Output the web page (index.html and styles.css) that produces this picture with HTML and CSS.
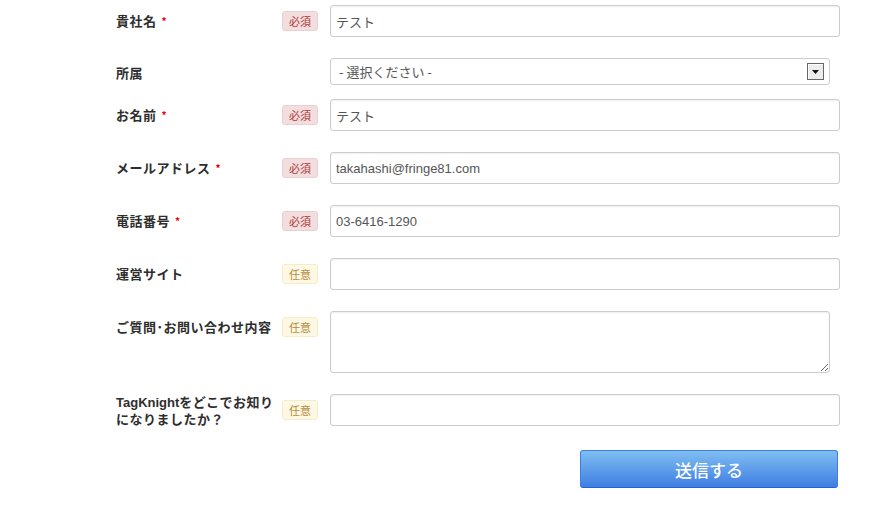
FILE: index.html
```html
<!DOCTYPE html>
<html lang="ja">
<head>
<meta charset="utf-8">
<title>お問い合わせ</title>
<link rel="stylesheet" href="styles.css">
</head>
<body>
<form class="form">
  <div class="row">
    <div class="label"><span class="txt">貴社名<span class="req">*</span></span></div>
    <div class="badge-col"><span class="badge must">必須</span></div>
    <input class="field" type="text" value="テスト">
  </div>
  <div class="row row-select">
    <div class="label label-select"><span class="txt">所属</span></div>
    <div class="badge-col"></div>
    <div class="select-wrap">
      <select class="select"><option>- 選択ください -</option></select>
      <span class="arrow"><svg width="7" height="4" viewBox="0 0 7 4"><path d="M0 0H7L3.5 4Z" fill="#111"/></svg></span>
    </div>
  </div>
  <div class="row">
    <div class="label"><span class="txt">お名前<span class="req">*</span></span></div>
    <div class="badge-col"><span class="badge must">必須</span></div>
    <input class="field" type="text" value="テスト">
  </div>
  <div class="row">
    <div class="label"><span class="txt">メールアドレス<span class="req">*</span></span></div>
    <div class="badge-col"><span class="badge must">必須</span></div>
    <input class="field latin" type="text" value="takahashi@fringe81.com">
  </div>
  <div class="row">
    <div class="label"><span class="txt">電話番号<span class="req">*</span></span></div>
    <div class="badge-col"><span class="badge must">必須</span></div>
    <input class="field latin" type="text" value="03-6416-1290">
  </div>
  <div class="row">
    <div class="label"><span class="txt">運営サイト</span></div>
    <div class="badge-col"><span class="badge opt">任意</span></div>
    <input class="field" type="text" value="">
  </div>
  <div class="row">
    <div class="label"><span class="txt">ご質問･お問い合わせ内容</span></div>
    <div class="badge-col"><span class="badge opt">任意</span></div>
    <textarea class="area"></textarea>
  </div>
  <div class="row row-last">
    <div class="label"><span class="txt"><span class="lt">TagKnight</span>をどこでお知り<br>になりましたか？</span></div>
    <div class="badge-col"><span class="badge opt">任意</span></div>
    <input class="field" type="text" value="">
  </div>
  <div class="actions">
    <button type="button" class="submit">送信する</button>
  </div>
</form>
</body>
</html>
```

FILE: styles.css
```css
* { box-sizing: border-box; }
html, body { margin: 0; background: #fff; }
body {
  font-family: "Noto Sans CJK JP", "Liberation Sans", sans-serif;
  color: #333;
}
.form {
  padding: 5px 0 0 116px;
}
.row {
  display: flex;
  align-items: flex-start;
  margin-bottom: 21px;
}
.row-select { margin-bottom: 14px; }
.row-last { height: 32px; margin-bottom: 24px; }
.label {
  width: 166px;
  min-height: 32px;
  display: flex;
  align-items: center;
  font-size: 13px;
  line-height: 16px;
  font-weight: bold;
  color: #2e2e2e;
  white-space: nowrap;
  letter-spacing: 0.5px;
}
.label-select { min-height: 27px; padding-top: 3px; }
.lt { font-family: "Liberation Sans", sans-serif; letter-spacing: 0; }
.req {
  color: #e00;
  font-size: 10px;
  line-height: 1;
  margin-left: 5px;
  position: relative;
  top: -1px;
}
.badge-col {
  width: 48px;
  min-height: 32px;
  display: flex;
  align-items: center;
}
.row-select .badge-col { min-height: 27px; }
.badge {
  display: inline-flex;
  align-items: center;
  justify-content: center;
  width: 36px;
  height: 20px;
  border-radius: 3px;
  font-size: 11px;
  line-height: 1;
}
.must {
  background: #f2dede;
  border: 1px solid #ebd0d3;
  color: #b03a38;
}
.opt {
  background: #fcf8e3;
  border: 1px solid #f8ecc8;
  color: #b88a40;
}
.field {
  width: 510px;
  height: 32px;
  border: 1px solid #ccc;
  border-radius: 3px;
  box-shadow: inset 0 1px 2px rgba(0,0,0,0.07);
  padding: 0 5px;
  font-family: "Noto Sans CJK JP", "Liberation Sans", sans-serif;
  font-size: 13px;
  color: #555;
  background: #fff;
  outline: none;
}
.field.latin { font-family: "Liberation Sans", sans-serif; font-size: 13px; }
.select-wrap {
  position: relative;
  width: 500px;
  height: 27px;
}
.select {
  -webkit-appearance: none;
  appearance: none;
  width: 500px;
  height: 27px;
  border: 1px solid #ccc;
  border-radius: 3px;
  background: #fff;
  padding: 0 8px;
  font-family: "Noto Sans CJK JP", sans-serif;
  font-size: 13px;
  color: #555;
  outline: none;
}
.arrow {
  position: absolute;
  right: 6px;
  top: 5px;
  width: 17px;
  height: 17px;
  border: 1px solid #666;
  background: #ececec;
  box-shadow: inset 1px 1px 0 #fff;
  display: flex;
  align-items: center;
  justify-content: center;
  pointer-events: none;
}
.area {
  width: 500px;
  height: 62px;
  border: 1px solid #ccc;
  border-radius: 3px;
  box-shadow: inset 0 1px 2px rgba(0,0,0,0.07);
  padding: 5px;
  font-size: 13px;
  outline: none;
  display: block;
}
.actions {
  padding-left: 464px;
}
.submit {
  display: block;
  width: 258px;
  height: 38px;
  border: 1px solid #3d7fe0;
  border-bottom-color: #2a62d0;
  border-radius: 3px;
  background: linear-gradient(#7fbef2, #3f7ee2);
  color: #fff;
  font-family: "Noto Sans CJK JP", sans-serif;
  font-size: 17px;
  font-weight: 500;
  cursor: pointer;
}
```
